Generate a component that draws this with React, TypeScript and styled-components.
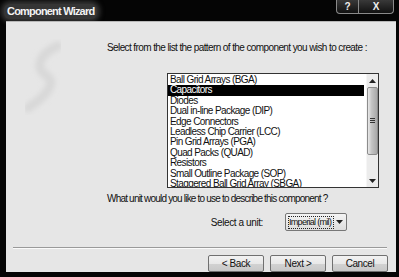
import styled, { createGlobalStyle } from 'styled-components'

const Global = createGlobalStyle`
  html, body { margin: 0; padding: 0; background: #000; }
  body { font-family: "Liberation Sans", Arial, sans-serif; }
`

const Window = styled.div`
  width: 399px;
  height: 277px;
  background: #050505;
  display: flex;
  flex-direction: column;
  overflow: hidden;
`

const TitleBar = styled.div`
  height: 21px;
  display: flex;
  align-items: flex-start;
  justify-content: space-between;
  padding: 0 5px 0 4px;
`

const Title = styled.div`
  margin-top: 4px;
  padding: 0 3px;
  height: 15px;
  line-height: 15px;
  font-size: 11px;
  font-weight: bold;
  letter-spacing: -0.8px;
  color: #f2f2f2;
  background: #353535;
  border-radius: 6px;
  box-shadow: 0 0 5px 3px #353535;
`

const Caps = styled.div`
  display: flex;
  margin-top: -1px;
`

const CapButton = styled.div<{ $w: number; $last?: boolean }>`
  width: ${p => p.$w}px;
  height: 14px;
  border: 1px solid #8a8a8a;
  border-top: none;
  border-left-width: ${p => (p.$last ? 0 : 1)}px;
  border-radius: ${p => (p.$last ? '0 0 4px 0' : '0 0 0 4px')};
  background: linear-gradient(#3c3c3c, #111);
  color: #eee;
  font-size: 10px;
  font-weight: bold;
  display: flex;
  align-items: center;
  justify-content: center;
`

const Client = styled.div`
  position: relative;
  margin: 0 3px 5px 6px;
  flex: 1;
  background: #e6e6e6;
  border-top: 1px solid #b8b8b8;
  display: flex;
  flex-direction: column;
  font-size: 10px;
  color: #111;
`

const Watermark = styled.svg`
  position: absolute;
  left: 12px;
  top: 14px;
`

const Prompt = styled.div<{ $top: number; $ls: number }>`
  margin: ${p => p.$top}px 0 0 101px;
  height: 12px;
  line-height: 12px;
  letter-spacing: ${p => p.$ls}px;
  white-space: nowrap;
`

const ListRow = styled.div`
  display: flex;
  margin: 19px 0 0 161px;
`

const ListBox = styled.div`
  width: 210px;
  height: 113px;
  border: 1px solid #333;
  background: #fff;
  display: flex;
  overflow: hidden;
`

const Items = styled.div`
  flex: 1;
  padding-top: 1px;
`

const Item = styled.div<{ $sel?: boolean }>`
  height: 10.4px;
  line-height: 10.4px;
  padding-left: 2px;
  margin-right: 2px;
  letter-spacing: -0.6px;
  white-space: nowrap;
  background: ${p => (p.$sel ? '#000' : 'transparent')};
  color: ${p => (p.$sel ? '#fff' : '#111')};
`

const ScrollBar = styled.div`
  width: 11px;
  display: flex;
  flex-direction: column;
  align-items: center;
  background: #ececec;
  border-left: 1px solid #f6f6f6;
`

const Arrow = styled.div`
  height: 13px;
  display: flex;
  align-items: center;
  justify-content: center;
`

const Thumb = styled.div`
  width: 9px;
  height: 66px;
  border: 1px solid #8c8c8c;
  border-radius: 2px;
  background: linear-gradient(90deg, #e8e8e8, #c4c4c4 40%, #a8a8a8);
  display: flex;
  align-items: center;
  justify-content: center;
`

const Track = styled.div`
  flex: 1;
`

const UnitRow = styled.div`
  display: flex;
  align-items: center;
  gap: 22px;
  margin: 8px 0 0 0;
  height: 18px;
`

const UnitLabel = styled.div`
  width: 257px;
  text-align: right;
  letter-spacing: -0.4px;
`

const Select = styled.div`
  width: 62px;
  height: 18px;
  box-sizing: border-box;
  border: 1px solid #777;
  border-radius: 2px;
  background: linear-gradient(#f4f4f4, #dcdcdc);
  display: flex;
  align-items: center;
  padding: 0 1px 0 2px;
`

const SelectValue = styled.div`
  flex: 1;
  height: 11px;
  line-height: 11px;
  border: 1px dotted #222;
  font-size: 9px;
  letter-spacing: -0.7px;
  white-space: nowrap;
`

const SelectArrow = styled.div`
  width: 11px;
  display: flex;
  justify-content: center;
`

const Separator = styled.div`
  margin: 16px 9px 0 7px;
  height: 1px;
  background: #9a9a9a;
  border-bottom: 1px solid #fafafa;
`

const Buttons = styled.div`
  display: flex;
  justify-content: flex-end;
  gap: 6px;
  margin: 6px 8px 0 0;
`

const Button = styled.div`
  width: 56px;
  height: 17px;
  box-sizing: border-box;
  border: 1px solid #707070;
  border-radius: 2px;
  background: linear-gradient(#f2f2f2 0%, #e8e8e8 50%, #d2d2d2 51%, #c8c8c8 100%);
  display: flex;
  align-items: center;
  justify-content: center;
  letter-spacing: -0.4px;
`

const items = [
  'Ball Grid Arrays (BGA)',
  'Capacitors',
  'Diodes',
  'Dual in-line Package (DIP)',
  'Edge Connectors',
  'Leadless Chip Carrier (LCC)',
  'Pin Grid Arrays (PGA)',
  'Quad Packs (QUAD)',
  'Resistors',
  'Small Outline Package (SOP)',
  'Staggered Ball Grid Array (SBGA)',
]

const Tri = ({ up }: { up?: boolean }) => (
  <svg width="7" height="4" viewBox="0 0 7 4">
    <path d={up ? 'M3.5 0 L7 4 L0 4 Z' : 'M0 0 L7 0 L3.5 4 Z'} fill="#222" />
  </svg>
)

export default function App() {
  return (
    <Window>
      <Global />
      <TitleBar>
        <Title>Component Wizard</Title>
        <Caps>
          <CapButton $w={21}>?</CapButton>
          <CapButton $w={34} $last>
            X
          </CapButton>
        </Caps>
      </TitleBar>
      <Client>
        <Watermark width="60" height="90" viewBox="0 0 60 90">
          <defs>
            <filter id="b">
              <feGaussianBlur stdDeviation="2.5" />
            </filter>
          </defs>
          <path
            d="M40 10 C30 14 20 22 22 32 C24 40 36 40 32 50 C28 60 18 66 10 72"
            stroke="#d8d8d8"
            strokeWidth="9"
            strokeLinecap="round"
            fill="none"
            filter="url(#b)"
          />
        </Watermark>
        <Prompt $top={20} $ls={-0.6}>
          Select from the list the pattern of the component you wish to create :
        </Prompt>
        <ListRow>
          <ListBox>
            <Items>
              {items.map((t, i) => (
                <Item key={t} $sel={i === 1}>
                  {t}
                </Item>
              ))}
            </Items>
            <ScrollBar>
              <Arrow>
                <Tri up />
              </Arrow>
              <Thumb>
                <svg width="5" height="6" viewBox="0 0 5 6">
                  <path d="M0 0.5h5M0 2.5h5M0 4.5h5" stroke="#333" strokeWidth="1" />
                </svg>
              </Thumb>
              <Track />
              <Arrow>
                <Tri />
              </Arrow>
            </ScrollBar>
          </ListBox>
        </ListRow>
        <Prompt $top={5} $ls={-0.8}>
          What unit would you like to use to describe this component ?
        </Prompt>
        <UnitRow>
          <UnitLabel>Select a unit:</UnitLabel>
          <Select>
            <SelectValue>Imperial (mil)</SelectValue>
            <SelectArrow>
              <Tri />
            </SelectArrow>
          </Select>
        </UnitRow>
        <Separator />
        <Buttons>
          <Button>&lt; Back</Button>
          <Button>Next &gt;</Button>
          <Button>Cancel</Button>
        </Buttons>
      </Client>
    </Window>
  )
}
